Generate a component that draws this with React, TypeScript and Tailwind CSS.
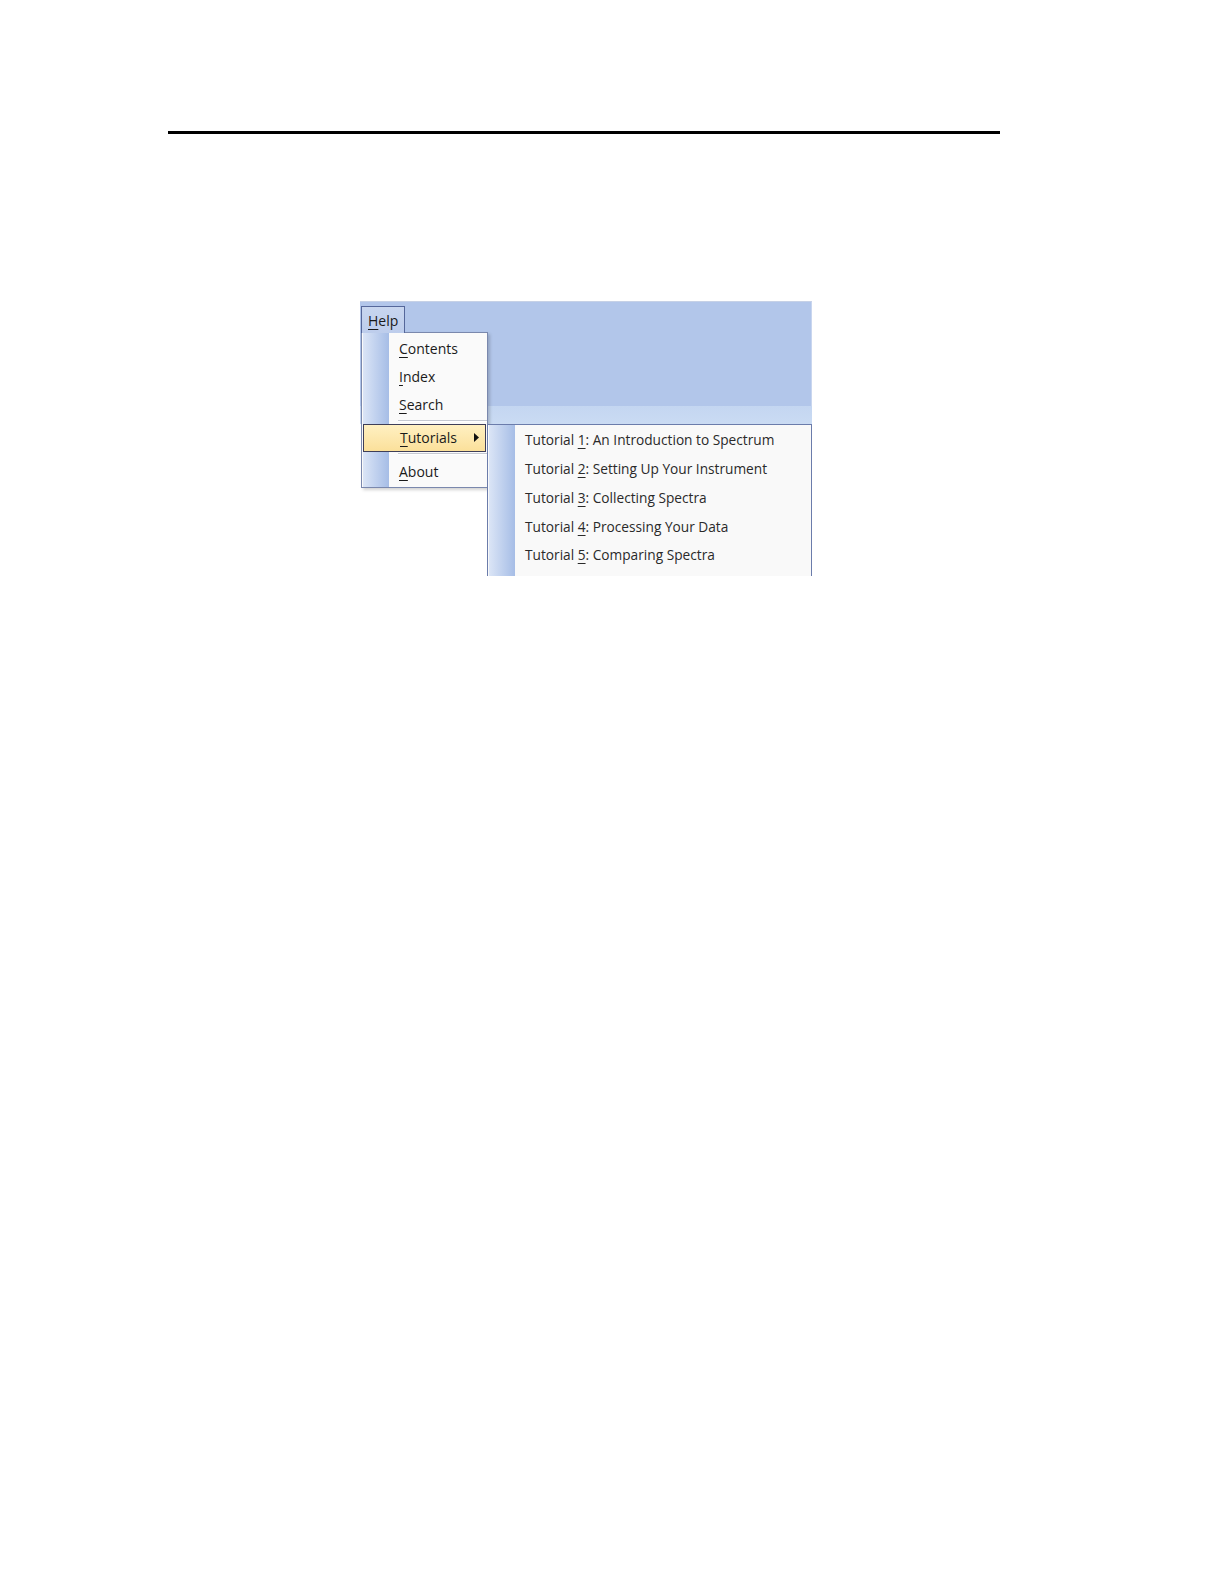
import React from "react";

const font = { fontFamily: '"Open Sans", "Noto Sans", "Liberation Sans", sans-serif' };

// label with one underlined access key
const Accel: React.FC<{ text: string; at: number }> = ({ text, at }) => (
  <span>
    {text.slice(0, at)}
    <span className="underline underline-offset-[3px]">{text[at]}</span>
    {text.slice(at + 1)}
  </span>
);

const Separator = () => (
  <div className="h-[5px] flex items-center pl-[36px]">
    <div className="w-full border-t border-[#c5c9d2] border-b border-b-white" />
  </div>
);

const helpItems = [
  { text: "Contents", at: 0 },
  { text: "Index", at: 0 },
  { text: "Search", at: 0 },
];

const tutorials = [
  { n: "1", title: "An Introduction to Spectrum" },
  { n: "2", title: "Setting Up Your Instrument" },
  { n: "3", title: "Collecting Spectra" },
  { n: "4", title: "Processing Your Data" },
  { n: "5", title: "Comparing Spectra" },
];

const App: React.FC = () => {
  return (
    <div className="bg-white w-full h-[1584px] overflow-hidden" style={font}>
      <div className="pt-[131px] pl-[168px]">
        <div className="w-[832px] h-[3px] bg-black" />
      </div>

      {/* screenshot of the Help menu */}
      <div className="ml-[360px] mt-[167px] w-[452px] h-[275px] relative overflow-hidden bg-white">
        <div className="h-[105px] bg-[#b2c6ea] border-t border-[#c6d1e6] border-r border-r-[#c9d6ef]" />
        <div className="h-[18px] bg-gradient-to-b from-[#c4d6f1] to-[#cadbf3]" />

        {/* Help menu title */}
        <div className="absolute left-[1px] top-[5px] w-[44px] h-[27px] z-20 border border-[#55679a] border-b-0 bg-gradient-to-b from-[#c8d6ef] to-[#bdcdec] flex items-center pl-[6px] text-[14px] text-[#1a1a1a]">
          <Accel text="Help" at={0} />
        </div>

        {/* dropdown */}
        <div className="absolute left-[1px] top-[31px] w-[127px] h-[156px] z-10 border border-[#7a88ad] bg-[#fafafa] shadow-[2px_2px_3px_rgba(0,0,0,0.18)]">
          <div className="absolute left-[1px] top-0 bottom-0 w-[26px] bg-gradient-to-r from-[#dbe5f6] to-[#a6bde6]" />
          <div className="relative pt-[1px] text-[14px] text-[#1a1a1a]">
            {helpItems.map((it) => (
              <div key={it.text} className="h-[28.3px] flex items-center pl-[37px]">
                <Accel text={it.text} at={it.at} />
              </div>
            ))}
            <Separator />
            <div className="mx-[1px] h-[28px] flex items-center justify-between pl-[36px] pr-[6px] border border-[#3e3e58] bg-gradient-to-b from-[#fff0c2] to-[#fbe09a]">
              <Accel text="Tutorials" at={0} />
              <svg width="5" height="9" viewBox="0 0 5 9">
                <path d="M0 0 L5 4.5 L0 9 Z" fill="#111" />
              </svg>
            </div>
            <Separator />
            <div className="h-[28.3px] flex items-center pl-[37px]">
              <Accel text="About" at={0} />
            </div>
          </div>
        </div>

        {/* tutorials submenu */}
        <div className="absolute left-[127px] top-[123px] w-[325px] h-[170px] z-10 border border-[#6b7cab] bg-[#f9f9f9]">
          <div className="absolute left-[1px] top-0 bottom-0 w-[26px] bg-gradient-to-r from-[#dbe5f6] to-[#a6bde6]" />
          <div className="relative pt-[1px] text-[13.7px] text-[#2a2a2a]">
            {tutorials.map((t) => (
              <div key={t.n} className="h-[28.8px] flex items-center pl-[37px] whitespace-nowrap">
                <span>
                  Tutorial <span className="underline underline-offset-[3px]">{t.n}</span>: {t.title}
                </span>
              </div>
            ))}
          </div>
        </div>
      </div>
    </div>
  );
};

export default App;
